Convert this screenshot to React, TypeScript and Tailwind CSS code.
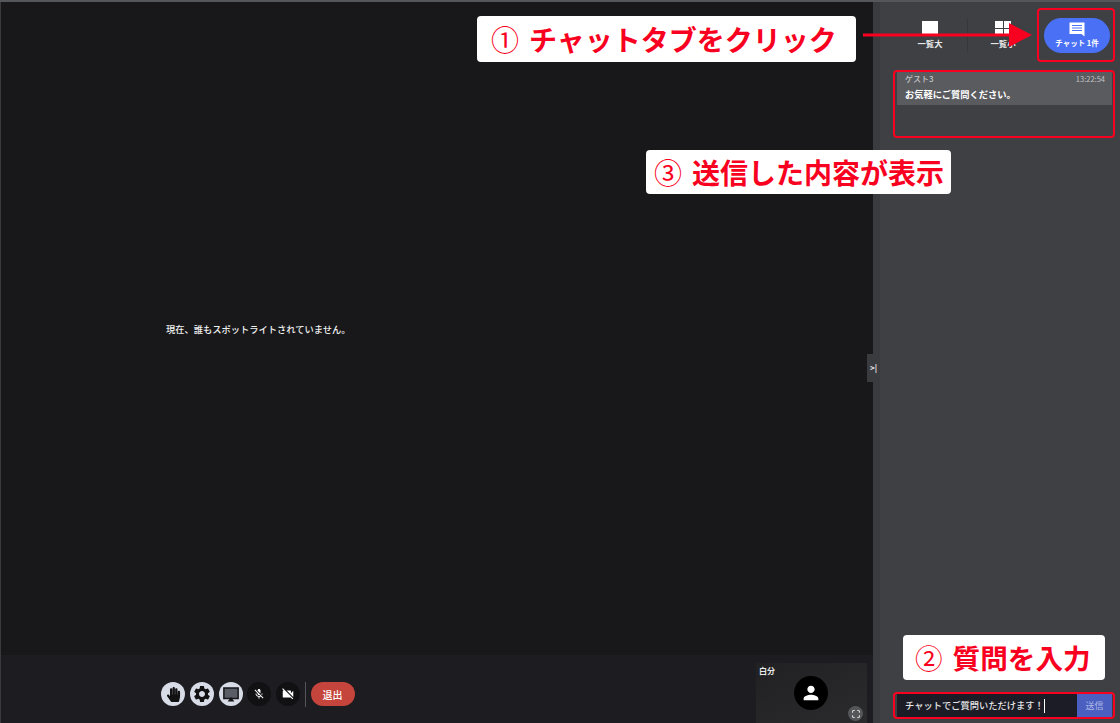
import React from 'react';
import { MdCropFree, MdMicOff, MdPerson, MdSettings, MdVideocamOff } from 'react-icons/md';
import { FaHandPaper } from 'react-icons/fa';

const cjk = { fontFamily: '"Noto Sans CJK JP", "Liberation Sans", sans-serif' };

const App: React.FC = () => {
  return (
    <div className="relative w-[1120px] h-[723px] overflow-hidden flex border-t-2 border-[#55565a] bg-[#18181a]" style={cjk}>
      {/* Stage */}
      <div className="w-[873px] flex flex-col border-l border-[#3a3a3c]">
        <div className="flex-1 flex items-center pl-[165px] pt-[3px]">
          <p className="text-[9.25px] font-medium text-[#f0f0f0]">現在、誰もスポットライトされていません。</p>
        </div>
        <div className="h-[68px] bg-[#1c1c21] flex">
          <div className="flex items-center gap-[4.75px] pl-[160px] pt-[10px] h-full">
            <button className="w-[24px] h-[24px] rounded-full bg-[#d8dce6] flex items-center justify-center text-[#111]"><FaHandPaper size={15} /></button>
            <button className="w-[24px] h-[24px] rounded-full bg-[#d8dce6] flex items-center justify-center text-[#111]"><MdSettings size={20} /></button>
            <button className="w-[24px] h-[24px] rounded-full bg-[#d8dce6] flex items-center justify-center">
              <svg width="18" height="18" viewBox="0 0 24 24">
                <rect x="2.5" y="4" width="19" height="14" fill="#5a5d65" stroke="#15151a" strokeWidth="2" />
                <polygon points="7.5,22 16.5,22 12,16" fill="#15151a" />
              </svg>
            </button>
            <button className="w-[24px] h-[24px] rounded-full bg-[#111114] flex items-center justify-center text-white"><MdMicOff size={12} /></button>
            <button className="w-[24px] h-[24px] rounded-full bg-[#111114] flex items-center justify-center text-white"><MdVideocamOff size={14} /></button>
            <div className="w-px h-[25px] bg-[#55565a]" />
            <button className="w-[44px] h-[24px] rounded-full bg-[#c5443b] text-[10px] font-medium text-white">退出</button>
          </div>
          <div className="ml-auto mr-[6px] mt-[8px] w-[111px] flex-none bg-gradient-to-br from-[#212123] to-[#2b2b2d] relative">
            <span className="absolute left-[3px] top-[2px] text-[8px] font-bold text-[#e8e8e8]">白分</span>
            <div className="absolute left-[38px] top-[13px] w-[34px] h-[34px] rounded-full bg-black flex items-center justify-center text-white"><MdPerson size={22} /></div>
            <div className="absolute right-[4px] bottom-[2px] w-[15px] h-[15px] rounded-full bg-[#555659] flex items-center justify-center text-white"><MdCropFree size={10} /></div>
          </div>
        </div>
      </div>

      {/* Side panel */}
      <div className="relative flex-1 flex flex-col bg-[#3f4044] border-l-[7px] border-[#3a3b3f] pl-[17px] pr-[8px]">
        <div className="flex items-center h-[34px] mt-[16px]">
          <div className="w-[70px] pr-[4px] flex flex-col items-center">
            <div className="w-[16px] h-[14px] bg-white mb-[2px]" />
            <span className="text-[8.3px] leading-[12px] font-bold text-[#e8e8e8]">一覧大</span>
          </div>
          <div className="w-px h-[34px] bg-[#37383b]" />
          <div className="w-[70px] flex flex-col items-center">
            <div className="grid grid-cols-2 gap-[1px] w-[16px] h-[14px] mb-[2px]">
              <div className="bg-white" /><div className="bg-white" /><div className="bg-white" /><div className="bg-white" />
            </div>
            <span className="text-[8.3px] leading-[12px] font-bold text-[#e8e8e8]">一覧小</span>
          </div>
          <div className="ml-auto mr-[2px] w-[66px] h-[35px] rounded-full bg-[#4a70f5] flex flex-col items-center justify-center text-white">
            <svg width="16" height="15" viewBox="0 0 16 15" className="mb-[1px]">
              <path d="M0.5 0.5H15.5V14.5L12.5 12H0.5Z" fill="#fff" />
              <rect x="3" y="3" width="10" height="1" fill="#4a70f5" />
              <rect x="3" y="5.5" width="10" height="1" fill="#4a70f5" />
              <rect x="3" y="8" width="10" height="1" fill="#4a70f5" />
            </svg>
            <span className="text-[7.5px] font-bold leading-[10px]">チャット 1件</span>
          </div>
        </div>

        <div className="mt-[20px] h-[33px] bg-[#5a5b5f] pl-[8px] pr-[7px] pt-[1px]">
          <div className="flex justify-between text-[8px] leading-[12px] text-[#c4c4c6]">
            <span className="font-medium">ゲスト3</span>
            <span className="text-[7.5px]">13:22:54</span>
          </div>
          <p className="text-[9.25px] font-bold leading-[18px] text-white">お気軽にご質問ください。</p>
        </div>

        <div className="mt-auto mb-[6px] h-[23px] flex">
          <div className="flex-1 bg-[#1b1c26] flex items-center pl-[8px] pt-[1px] text-[9.25px] font-medium text-[#e6e6e6]">
            チャットでご質問いただけます！<span className="w-px h-[14px] bg-white" />
          </div>
          <button className="w-[35px] bg-[#4a5fc0] text-[9px] text-[#aeb8e6]">送信</button>
        </div>
      </div>

      {/* Annotations */}
      <div className="absolute left-[477px] top-[14px] w-[379px] h-[46px] rounded-[4px] bg-white flex items-center gap-[10px] pl-[14px] text-[28px] font-bold text-[#f80020]">
        <span className="font-normal">①</span><span>チャットタブをクリック</span>
      </div>
      <div className="absolute left-[646px] top-[148px] w-[305px] h-[44px] rounded-[4px] bg-white flex items-center gap-[10px] pl-[8px] text-[28px] font-bold text-[#f80020]">
        <span className="font-normal">③</span><span>送信した内容が表示</span>
      </div>
      <div className="absolute left-[903px] top-[633px] w-[202px] h-[45px] rounded-[4px] bg-white flex items-center gap-[10px] pl-[12px] text-[27.6px] font-bold text-[#f80020]">
        <span className="font-normal">②</span><span>質問を入力</span>
      </div>

      <svg className="absolute left-[863px] top-[20px]" width="170" height="26" viewBox="0 0 170 26">
        <rect x="0" y="11.5" width="150" height="3" fill="#f80020" />
        <polygon points="146,1 169,13 146,25" fill="#f80020" />
      </svg>

      <div className="absolute left-[1037px] top-[6px] w-[78px] h-[54px] rounded-[4px] border-2 border-[#f80020]" />
      <div className="absolute left-[893px] top-[68px] w-[222px] h-[68px] rounded-[4px] border-2 border-[#f80020]" />
      <div className="absolute left-[893px] top-[690px] w-[222px] h-[27px] rounded-[4px] border-2 border-[#f80020]" />

      <div className="absolute left-[867px] top-[352px] w-[13px] h-[28px] bg-[#3a3b3f] flex items-center justify-center text-[8px] font-bold leading-none text-[#e8e8e8]">&gt;|</div>
    </div>
  );
};

export default App;
